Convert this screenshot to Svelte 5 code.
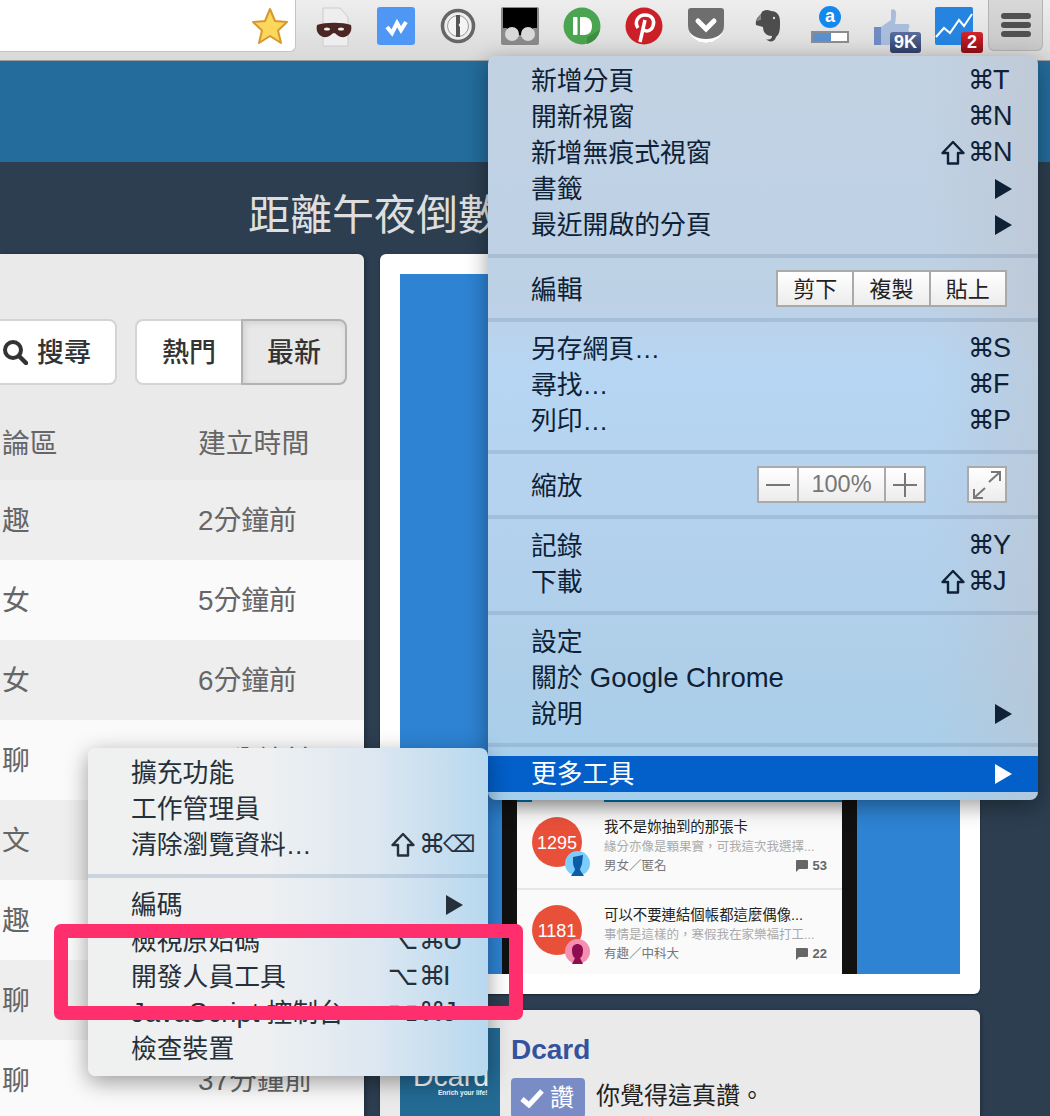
<script>
  const rows = [
    ['趣', '2分鐘前'],
    ['女', '5分鐘前'],
    ['女', '6分鐘前'],
    ['聊', '12分鐘前'],
    ['文', '15分鐘前'],
    ['趣', '21分鐘前'],
    ['聊', '28分鐘前'],
    ['聊', '37分鐘前']
  ];

  const posts = [
    { score: 1295, title: '我不是妳抽到的那張卡', sub: '緣分亦像是顆果實\uFF0C可我這次我選擇...', meta: '男女\uFF0F匿名', count: 53, male: true },
    { score: 1181, title: '可以不要連結個帳都這麼偶像...', sub: '事情是這樣的\uFF0C寒假我在家樂福打工...', meta: '有趣\uFF0F中科大', count: 22, male: false }
  ];

  const moreTools = [
    [
      { label: '擴充功能' },
      { label: '工作管理員' },
      { label: '清除瀏覽資料…', keys: '⇧⌘⌫' }
    ],
    [
      { label: '編碼', arrow: true },
      { label: '檢視原始碼', keys: '⌥⌘U' },
      { label: '開發人員工具', keys: '⌥⌘I' },
      { latin: 'JavaScript', after: ' 控制台', keys: '⌥⌘J' },
      { label: '檢查裝置' }
    ]
  ];

  function keyClass(ch) {
    if (ch === '⌥') return 'sym opt';
    if (ch === '⌘') return 'sym cmd';
    if (ch === '⌫') return 'sym letter bksp';
    return 'letter';
  }
</script>

{#snippet item(it)}
  <div class="item" class:active={it.active}>
    <span class="label">{it.label ?? ''}{#if it.latin}<span class="latin">{it.latin}</span>{/if}{it.after ?? ''}</span>
    {#if it.keys}
      <span class="keys">
        {#each [...it.keys] as ch}
          {#if ch === '⇧'}
            <span class="key shift">
              <svg width="24" height="25" viewBox="0 0 24 25"><path d="M12 2 L22.500 13 H17 V23.500 H7 V13 H1.500 Z" fill="none" stroke="currentColor" stroke-width="2.400" stroke-linejoin="round" /></svg>
            </span>
          {:else}
            <span class="key {keyClass(ch)}">{ch}</span>
          {/if}
        {/each}
      </span>
    {/if}
    {#if it.arrow}
      <svg class="arrow" width="17" height="20" viewBox="0 0 17 20"><path d="M0 0 L17 10 L0 20 Z" fill="currentColor" /></svg>
    {/if}
  </div>
{/snippet}

<div class="page">
  <header class="chrome">
    <div class="omnibox">
      <svg width="38" height="38" viewBox="0 0 38 38">
        <path d="M19 2 L24 14 L36 15 L27 23.500 L30 36 L19 29 L8 36 L11 23.500 L2 15 L14 14 Z" fill="#fbd75b" stroke="#d8972e" stroke-width="2" stroke-linejoin="round" />
      </svg>
    </div>
    <div class="exts">
      <svg width="38" height="40" viewBox="0 0 38 40">
        <path d="M8 1 H25 L33 10 V39 H8 Z" fill="#eeeeee" stroke="#cccccc" />
        <path d="M2 18 C10 15 28 15 36 18 C38 26 32 31 26 30 C22 29 21 26 19 26 C17 26 16 29 12 30 C6 31 0 26 2 18 Z" fill="#4b2623" />
        <ellipse cx="12" cy="22" rx="3" ry="1.600" fill="#eee" />
        <ellipse cx="26" cy="22" rx="3" ry="1.600" fill="#eee" />
      </svg>
      <svg width="38" height="38" viewBox="0 0 38 38">
        <rect width="38" height="38" rx="3" fill="#4f97f5" />
        <path d="M10 20 L15 26 L20 16 L24 23 L29 15" fill="none" stroke="#fff" stroke-width="4" />
      </svg>
      <svg width="38" height="38" viewBox="0 0 38 38">
        <circle cx="19" cy="19" r="15.500" fill="#eee" stroke="#666" stroke-width="3.500" />
        <circle cx="19" cy="19" r="10.500" fill="#f4f4f4" stroke="#999" />
        <path d="M17 8 H21 V16 L19.500 18 L21 20 V30 H17 Z" fill="#555" />
      </svg>
      <svg class="soft" width="38" height="38" viewBox="0 0 38 38">
        <rect width="38" height="38" rx="2" fill="#8a8a8a" />
        <rect x="2" y="1" width="34" height="20" fill="#000" />
        <rect x="6" y="14" width="26" height="14" fill="#000" />
        <circle cx="11" cy="27" r="7" fill="#d8d8d8" />
        <circle cx="27" cy="27" r="7" fill="#d8d8d8" />
      </svg>
      <svg width="38" height="38" viewBox="0 0 38 38">
        <circle cx="19" cy="19" r="18.500" fill="#4ba44f" />
        <path d="M24 30 L37 23 A18.500 18.500 0 0 1 24 37 Z" fill="#3b8f42" />
        <rect x="10" y="10" width="4.500" height="18" rx="1" fill="#fff" />
        <path d="M17 10 H21 C26.500 10 29 14 29 19 C29 24 26.500 28 21 28 H17 Z" fill="#fff" />
      </svg>
      <svg width="38" height="38" viewBox="0 0 38 38">
        <circle cx="19" cy="19" r="18.500" fill="#cb2027" />
        <path d="M13 21 C9 15 13 8 20 8 C27 8 30 13 28 19 C26 25 20 25 18 22 M20 13 L15 35" fill="none" stroke="#fff" stroke-width="3.500" />
      </svg>
      <svg width="38" height="38" viewBox="0 0 38 38">
        <path d="M1 4 Q1 1 4 1 H34 Q37 1 37 4 V18 C37 28 29 36 19 36 C9 36 1 28 1 18 Z" fill="#6e6e6e" />
        <path d="M1 20 C2 30 10 36 19 36 C28 36 36 30 37 20 C36 36 2 36 1 20 Z" fill="#fff" />
        <path d="M11 14 L19 22 L27 14" fill="none" stroke="#fff" stroke-width="5" stroke-linecap="round" />
      </svg>
      <svg width="38" height="38" viewBox="0 0 38 38">
        <path d="M12 7 C13 3 18 2 22 4 C28 4 31 8 31 15 C31 22 31 27 27 30 C26 35 20 36 17 32 C19 33 23 33 23 29 C18 29 14 26 14 20 L7 18 C6 13 9 10 12 7 Z" fill="#4d4d4d" />
        <path d="M12 7 V13 L7 14 Z" fill="#8a8a8a" />
        <circle cx="25" cy="11" r="1.200" fill="#ddd" />
      </svg>
      <div class="ext alexa">
        <span class="alexa-a">a</span>
        <span class="alexa-bar"><i></i></span>
      </div>
      <div class="ext">
        <svg width="38" height="40" viewBox="0 0 38 40">
          <path d="M1 20 H8 V38 H1 Z" fill="#6f8cc2" />
          <path d="M8 20 L18 13 V3 C21 1 24 4 23 9 L22 17 H35 C37 17 37 21 35 22 C37 24 36 28 33 28 L30 38 H8 Z" fill="#a9bcdc" />
        </svg>
        <span class="badge navy">9K</span>
      </div>
      <div class="ext">
        <svg width="38" height="38" viewBox="0 0 38 38">
          <rect width="38" height="38" rx="2" fill="#2584df" />
          <path d="M1 30 L9 21 L15 26 L24 13 L29 19 L37 7" fill="none" stroke="#fff" stroke-width="2" />
        </svg>
        <span class="badge red">2</span>
      </div>
    </div>
    <div class="burger"><i></i><i></i><i></i></div>
  </header>

  <div class="band"></div>

  <main class="main">
    <h1>距離午夜倒數</h1>
    <div class="cols">
      <section class="list">
        <div class="tools">
          <button class="search">
            <svg width="26" height="26" viewBox="0 0 26 26"><circle cx="11" cy="11" r="8" fill="none" stroke="#333" stroke-width="4" /><path d="M17 17 L24 24" stroke="#333" stroke-width="4.500" stroke-linecap="round" /></svg>
            搜尋
          </button>
          <div class="seg">
            <button>熱門</button>
            <button class="on">最新</button>
          </div>
        </div>
        <div class="row head"><span>論區</span><span>建立時間</span></div>
        {#each rows as r, i}
          <div class="row" class:alt={i % 2 === 1}><span>{r[0]}</span><span>{r[1]}</span></div>
        {/each}
      </section>

      <div class="side">
        <section class="shot">
          <div class="hero">
            <div class="phone">
              <div class="appbar"><i></i></div>
              {#each posts as p, i}
                <div class="post" class:first={i === 0}>
                  <div class="score">
                    {p.score}
                    <svg class="avatar" width="25" height="25" viewBox="0 0 25 25">
                      {#if p.male}
                        <circle cx="12.500" cy="12.500" r="12.500" fill="#7ccdfb" />
                        <path d="M8 6 L18 4 L17 13 C16 16 15 17 15 19 L19 25 H6 L10 19 C10 17 8 15 8 12 Z" fill="#0b5ca6" />
                      {:else}
                        <circle cx="12.500" cy="12.500" r="12.500" fill="#f48fb1" />
                        <path d="M7 11 C7 3 18 3 18 11 C18 15 17 18 15 19 L18 25 H7 L10 19 C8 18 7 15 7 11 Z" fill="#8e0c50" />
                      {/if}
                    </svg>
                  </div>
                  <div class="body">
                    <div class="title">{p.title}</div>
                    <div class="sub">{p.sub}</div>
                    <div class="meta">
                      <span>{p.meta}</span>
                      <span class="count">
                        <svg width="12" height="12" viewBox="0 0 12 12"><path d="M1 0 H11 Q12 0 12 1 V8 Q12 9 11 9 H3 L0 12 V1 Q0 0 1 0 Z" fill="#666" /></svg>
                        {p.count}
                      </span>
                    </div>
                  </div>
                </div>
              {/each}
            </div>
          </div>
        </section>

        <section class="fbcard">
          <div class="thumb">
            <span class="logo">Dcard</span>
            <span class="slogan">Enrich your life!</span>
          </div>
          <div class="fbinfo">
            <div class="fbname">Dcard</div>
            <div class="fbline">
              <span class="like">
                <svg width="24" height="20" viewBox="0 0 24 20"><path d="M2 11 L9 17 L22 3" fill="none" stroke="#fff" stroke-width="5" /></svg>
                讚
              </span>
              你覺得這真讚。
            </div>
          </div>
        </section>
      </div>
    </div>
  </main>

  <!-- chrome menu, main level -->
  <div class="menu main-menu">
    <div class="group">
      {@render item({ label: '新增分頁', keys: '⌘T' })}
      {@render item({ label: '開新視窗', keys: '⌘N' })}
      {@render item({ label: '新增無痕式視窗', keys: '⇧⌘N' })}
      {@render item({ label: '書籤', arrow: true })}
      {@render item({ label: '最近開啟的分頁', arrow: true })}
    </div>
    <hr />
    <div class="ctl-row">
      <span class="label">編輯</span>
      <div class="btns edit"><span>剪下</span><span>複製</span><span>貼上</span></div>
    </div>
    <hr />
    <div class="group">
      {@render item({ label: '另存網頁…', keys: '⌘S' })}
      {@render item({ label: '尋找…', keys: '⌘F' })}
      {@render item({ label: '列印…', keys: '⌘P' })}
    </div>
    <hr />
    <div class="ctl-row zoom">
      <span class="label">縮放</span>
      <div class="btns zoomer">
        <span><svg width="24" height="2" viewBox="0 0 24 2"><rect width="24" height="2" fill="#777" /></svg></span>
        <span class="pct">100%</span>
        <span><svg width="24" height="24" viewBox="0 0 24 24"><path d="M0 12 H24 M12 0 V24" stroke="#777" stroke-width="2" /></svg></span>
      </div>
      <div class="btns full">
        <span><svg width="28" height="28" viewBox="0 0 28 28"><path d="M16 11 L27 1 M18 1 H27 V10 M12 17 L1 27 M1 18 V27 H10" fill="none" stroke="#777" stroke-width="2" /></svg></span>
      </div>
    </div>
    <hr />
    <div class="group">
      {@render item({ label: '記錄', keys: '⌘Y' })}
      {@render item({ label: '下載', keys: '⇧⌘J' })}
    </div>
    <hr />
    <div class="group">
      {@render item({ label: '設定' })}
      {@render item({ label: '關於 ', latin: 'Google Chrome' })}
      {@render item({ label: '說明', arrow: true })}
    </div>
    <hr />
    <div class="group">
      {@render item({ label: '更多工具', arrow: true, active: true })}
    </div>
  </div>

  <!-- submenu -->
  <div class="menu more">
    {#each moreTools as group, i}
      {#if i > 0}<hr />{/if}
      <div class="group">
        {#each group as it}
          {@render item(it)}
        {/each}
      </div>
    {/each}
  </div>

  <!-- pink annotation -->
  <div class="mark"></div>
</div>

<style>
  :global(body) {
    overflow: hidden;
  }

  .page {
    position: relative;
    width: 1050px;
    height: 1116px;
    overflow: hidden;
    background: #2c3e50;
    font-family: "Liberation Sans", "Noto Sans CJK TC", sans-serif;
  }

  /* browser bar */
  .chrome {
    display: flex;
    align-items: flex-start;
    height: 61px;
    box-sizing: border-box;
    background: linear-gradient(#eeeeee, #d9d9d9);
    border-bottom: 1px solid #a0a0a0;
  }
  .omnibox {
    display: flex;
    align-items: center;
    justify-content: flex-end;
    width: 296px;
    height: 52px;
    box-sizing: border-box;
    padding-right: 6px;
    background: #fff;
    border: 1px solid #c4c4c4;
    border-top: 0;
    border-left: 0;
    border-radius: 0 0 6px 0;
    flex-shrink: 0;
  }
  .exts {
    display: flex;
    align-items: flex-start;
    gap: 24px;
    margin-left: 19px;
    padding-top: 7px;
  }
  .soft {
    filter: blur(0.7px);
  }
  .ext {
    position: relative;
    width: 38px;
    height: 38px;
  }
  .alexa-a {
    position: absolute;
    top: -1px;
    left: 8px;
    width: 22px;
    height: 22px;
    border-radius: 50%;
    background: #1389ee;
    color: #fff;
    font-size: 18px;
    font-weight: bold;
    line-height: 20px;
    text-align: center;
  }
  .alexa-bar {
    position: absolute;
    left: 0;
    top: 24px;
    width: 38px;
    height: 12px;
    background: #fff;
    border: 2px solid #8d8d8d;
    box-sizing: border-box;
  }
  .alexa-bar i {
    display: block;
    width: 18px;
    height: 100%;
    background: #5a8fd0;
  }
  .badge {
    position: absolute;
    bottom: -8px;
    right: -10px;
    padding: 1px 4px;
    border-radius: 3px;
    color: #fff;
    font-size: 18px;
    font-weight: bold;
    line-height: 19px;
  }
  .navy {
    background: linear-gradient(#5a6d9c, #2f3f6a);
  }
  .red {
    right: -10px;
    padding: 1px 6px;
    background: linear-gradient(#d3252c, #8e0e14);
  }
  .burger {
    display: flex;
    flex-direction: column;
    gap: 3px;
    justify-content: center;
    align-items: center;
    width: 55px;
    height: 51px;
    margin-left: 15px;
    background: linear-gradient(#d8d8d8, #c8c8c8);
    border: 1px solid #b3b3b3;
    border-top: 0;
    border-radius: 0 0 6px 6px;
    box-sizing: border-box;
  }
  .burger i {
    width: 30px;
    height: 6px;
    border-radius: 3px;
    background: #505050;
  }

  .band {
    height: 101px;
    background: #236c9b;
  }

  .main {
    display: flex;
    flex-direction: column;
  }
  h1 {
    margin: 0;
    height: 92px;
    box-sizing: border-box;
    padding: 25px 0 0 248px;
    color: #dedede;
    font-size: 42px;
    font-weight: normal;
    line-height: 58px;
    white-space: nowrap;
  }
  .cols {
    display: flex;
    gap: 16px;
  }

  /* left table card */
  .list {
    flex: 0 0 364px;
    background: #eaeaea;
    border-radius: 0 6px 0 0;
    box-shadow: 1px 1px 5px rgba(0, 0, 0, 0.35);
  }
  .tools {
    display: flex;
    justify-content: flex-end;
    gap: 18px;
    padding: 65px 17px 0 0;
  }
  button {
    font: inherit;
    color: #333;
    font-size: 27px;
    font-weight: 500;
    background: #fff;
    border: 2px solid #d4d4d4;
    height: 66px;
    box-sizing: border-box;
    padding: 0 0 4px;
  }
  .search {
    display: flex;
    align-items: center;
    justify-content: flex-end;
    gap: 9px;
    width: 117px;
    padding-right: 24px;
    border-left: 0;
    border-radius: 0 8px 8px 0;
  }
  .search svg {
    margin-top: 4px;
  }
  .seg {
    display: flex;
  }
  .seg button {
    width: 106px;
    border-radius: 8px 0 0 8px;
    border-right: 0;
  }
  .seg .on {
    background: #e8e8e8;
    border: 2px solid #b2b2b2;
    border-radius: 0 8px 8px 0;
    box-shadow: inset 2px 2px 6px rgba(0, 0, 0, 0.1);
  }
  .row {
    display: grid;
    grid-template-columns: 196px 1fr;
    align-items: center;
    height: 80px;
    box-sizing: border-box;
    padding: 0 0 4px 2px;
    background: #eeeeee;
    color: #666;
    font-size: 27.800px;
    white-space: nowrap;
  }
  .row.alt {
    background: #fafafa;
  }
  .row.head {
    height: 95px;
    padding-top: 21px;
    background: #eaeaea;
  }

  /* right column */
  .side {
    flex: 0 0 600px;
    display: flex;
    flex-direction: column;
    gap: 16px;
  }
  .shot {
    height: 740px;
    box-sizing: border-box;
    padding: 20px;
    background: #fff;
    border-radius: 6px;
    box-shadow: 0 1px 2px rgba(0, 0, 0, 0.4);
  }
  .hero {
    display: flex;
    align-items: flex-end;
    height: 100%;
    padding-left: 102px;
    background: #2e83d3;
  }
  .phone {
    width: 325px;
    background: #fafafa;
    border-left: 15px solid #111;
    border-right: 15px solid #111;
  }
  .appbar {
    height: 28px;
    background: #0070b0;
    position: relative;
  }
  .appbar i {
    position: absolute;
    left: 15px;
    bottom: 0;
    width: 72px;
    height: 2px;
    background: #d8d8d8;
  }
  .post {
    display: flex;
    height: 84px;
    padding-top: 15px;
    box-sizing: border-box;
    color: #222;
  }
  .post.first {
    background: linear-gradient(#dddddd, #fafafa 14px);
    height: 88px;
    border-bottom: 2px solid #e6e6e6;
  }
  .score {
    position: relative;
    flex: 0 0 50px;
    height: 50px;
    margin: 0 22px 0 15px;
    border-radius: 50%;
    background: #e8503a;
    color: #fff;
    font-size: 18px;
    line-height: 52px;
    text-align: center;
  }
  .avatar {
    position: absolute;
    right: -8px;
    bottom: -9px;
  }
  .body {
    flex: 1;
    padding-right: 15px;
    min-width: 0;
  }
  .title {
    font-size: 14.400px;
    line-height: 20px;
    white-space: nowrap;
  }
  .sub {
    color: #aaa;
    font-size: 12.500px;
    line-height: 20px;
    white-space: nowrap;
  }
  .meta {
    display: flex;
    justify-content: space-between;
    color: #777;
    font-size: 12.500px;
    line-height: 18px;
  }
  .count {
    display: flex;
    align-items: center;
    gap: 5px;
    font-size: 13px;
    font-weight: bold;
    color: #666;
  }

  .fbcard {
    display: flex;
    gap: 11px;
    height: 200px;
    box-sizing: border-box;
    padding: 18px 20px;
    background: #eaeaea;
    border-radius: 6px 6px 0 0;
    box-shadow: 1px 1px 4px rgba(0, 0, 0, 0.3);
  }
  .thumb {
    position: relative;
    flex: 0 0 100px;
    height: 100px;
    background: #236a94;
    color: #fff;
  }
  .logo {
    position: absolute;
    left: 13px;
    top: 28px;
    font-size: 28.500px;
    line-height: 40px;
  }
  .slogan {
    position: absolute;
    left: 38px;
    top: 61px;
    font-size: 6.500px;
    font-weight: bold;
    white-space: nowrap;
  }
  .fbname {
    color: #34539c;
    font-size: 28px;
    font-weight: bold;
    line-height: 44px;
  }
  .fbline {
    display: flex;
    align-items: flex-start;
    gap: 11px;
    margin-top: 6px;
    color: #222;
    font-size: 24px;
    line-height: 36px;
  }
  .like {
    display: flex;
    align-items: center;
    gap: 6px;
    width: 74px;
    height: 40px;
    box-sizing: border-box;
    padding-left: 9px;
    background: #7a8cc6;
    border-radius: 4px;
    color: #fff;
  }

  /* menus */
  .menu {
    position: absolute;
    box-sizing: border-box;
    border-radius: 8px;
    color: #0e2136;
    font-size: 25.800px;
    box-shadow: 0 6px 22px rgba(0, 0, 0, 0.38);
  }
  .main-menu {
    left: 488px;
    top: 56px;
    width: 550px;
    height: 744px;
    padding: 7px 0 9px;
    background:
      linear-gradient(90deg, rgba(190, 195, 205, 0) 80%, rgba(190, 195, 205, 0.55) 100%),
      linear-gradient(#c2d2e3 0, #bdd1e6 33%, #b6d6f3 42%, #b5d2ee 60%, #adcee8 85%, #a4d0ee 100%);
  }
  .more {
    left: 88px;
    top: 748px;
    width: 400px;
    height: 328px;
    padding: 7px 0 9px;
    color: #26303a;
    background: linear-gradient(90deg, #f0f0f0 0, #eef0f2 45%, #dce7f1 72%, #b7d8ef 100%);
  }
  hr {
    height: 4px;
    margin: 11px 0 9px;
    border: 0;
    background: rgba(120, 145, 175, 0.3);
  }
  .item {
    display: flex;
    align-items: center;
    justify-content: space-between;
    height: 36px;
    padding: 0 26px 0 43px;
    white-space: nowrap;
  }
  .label {
    padding-bottom: 6px;
  }
  .ctl-row .label {
    padding-bottom: 2px;
  }
  .latin {
    font-size: 27.500px;
  }
  .item.active {
    background: #035fc9;
    color: #fff;
  }
  .keys {
    display: flex;
    align-items: center;
    padding-bottom: 2px;
  }
  .key {
    display: block;
    font-size: 27px;
    line-height: 36px;
    white-space: nowrap;
  }
  .key svg {
    display: block;
  }
  .sym {
    font-family: "DejaVu Sans", sans-serif;
    font-size: 26.500px;
  }
  .shift {
    width: 27px;
  }
  .cmd {
    width: 25px;
  }
  .letter {
    width: 19px;
  }
  .more .item {
    padding: 0 15px 0 43px;
  }
  .more .shift {
    width: 28px;
  }
  .more .opt {
    width: 31px;
  }
  .more .cmd {
    width: 24px;
  }
  .more .letter {
    width: 30px;
  }
  .more .bksp {
    font-size: 23px;
    text-align: right;
  }
  .more .arrow {
    margin-right: 10px;
  }
  .ctl-row {
    display: flex;
    align-items: center;
    height: 60px;
    margin: -9px 0 -11px;
    padding: 0 31px 0 43px;
  }
  .ctl-row.zoom {
    height: 61px;
  }
  .btns {
    display: flex;
    height: 37px;
    box-sizing: border-box;
    background: #aaa;
    border: 2px solid #aaa;
    gap: 2px;
    color: #222;
    font-size: 22px;
  }
  .btns span {
    display: flex;
    align-items: center;
    justify-content: center;
    background: linear-gradient(#ffffff, #ececec);
  }
  .edit {
    margin-left: auto;
    width: 231px;
  }
  .edit span {
    flex: 1;
    padding-bottom: 3px;
  }
  .zoomer {
    margin-left: auto;
    width: 169px;
  }
  .zoomer span {
    flex: 0 0 38px;
  }
  .zoomer .pct {
    flex: 1;
    color: #777;
    font-size: 23.500px;
  }
  .full {
    margin-left: 41px;
    width: 40px;
  }
  .full span {
    flex: 1;
  }

  .mark {
    position: absolute;
    left: 54px;
    top: 924px;
    width: 469px;
    height: 96px;
    box-sizing: border-box;
    border: 14px solid #ff2f6e;
    border-radius: 7px;
  }
</style>
